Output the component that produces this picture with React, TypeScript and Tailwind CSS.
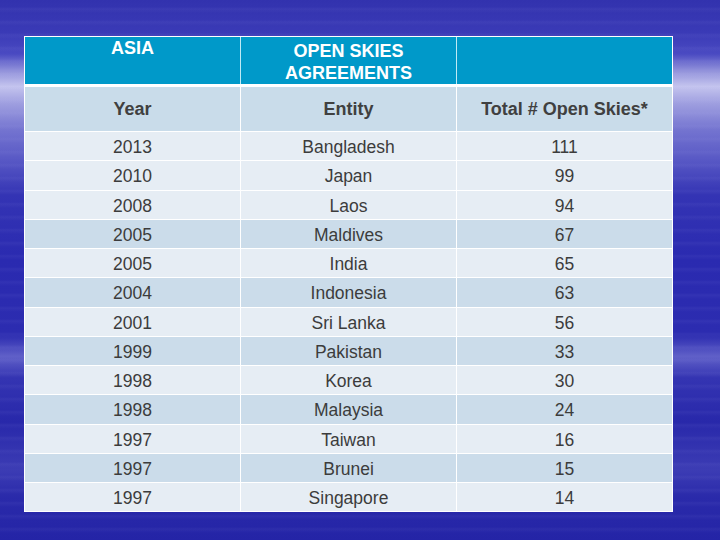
import React from "react";

const rows: { year: string; entity: string; total: string; dark: boolean }[] = [
  { year: "2013", entity: "Bangladesh", total: "111", dark: false },
  { year: "2010", entity: "Japan", total: "99", dark: false },
  { year: "2008", entity: "Laos", total: "94", dark: false },
  { year: "2005", entity: "Maldives", total: "67", dark: true },
  { year: "2005", entity: "India", total: "65", dark: false },
  { year: "2004", entity: "Indonesia", total: "63", dark: true },
  { year: "2001", entity: "Sri Lanka", total: "56", dark: false },
  { year: "1999", entity: "Pakistan", total: "33", dark: true },
  { year: "1998", entity: "Korea", total: "30", dark: false },
  { year: "1998", entity: "Malaysia", total: "24", dark: true },
  { year: "1997", entity: "Taiwan", total: "16", dark: false },
  { year: "1997", entity: "Brunei", total: "15", dark: true },
  { year: "1997", entity: "Singapore", total: "14", dark: false },
];

export default function App() {
  return (
    <div
      className="w-[720px] h-[540px] overflow-hidden pt-[36px] pl-[24px] bg-[repeating-linear-gradient(180deg,rgba(255,255,255,0)_0px,rgba(255,255,255,0)_7px,rgba(200,200,255,0.05)_9px,rgba(255,255,255,0)_13px),linear-gradient(180deg,#3232ae_0%,#3a3ab6_6%,#4a4ac2_10%,#9090da_13%,#c4c4ee_16%,#a0a0e0_19%,#7474d0_24%,#5656c4_30%,#3434b4_36%,#2a2ab0_48%,#2c2cb0_62%,#6060c8_66%,#3434b2_70%,#2828aa_78%,#3c3cb4_87%,#2a2aaa_92%,#2424a6_100%)]"
      style={{ fontFamily: '"Liberation Sans", Arial, sans-serif' }}
    >
      <div className="w-[649px] bg-white p-[1px] flex flex-col">
        <div className="grid grid-cols-[215px_215px_215px] gap-x-[1px] h-[47px] text-white font-bold text-[18px] leading-[22px] text-center bg-[#bfeaf5]">
          <div className="bg-[#0099c9]">ASIA</div>
          <div className="bg-[#0099c9] pt-[3px]">
            OPEN SKIES
            <br />
            AGREEMENTS
          </div>
          <div className="bg-[#0099c9]"></div>
        </div>
        <div className="mt-[3px] grid grid-cols-[215px_215px_215px] gap-x-[1px] h-[44px] text-[#404040] font-bold text-[18px] text-center">
          <div className="bg-[#c9dcea] flex items-center justify-center">Year</div>
          <div className="bg-[#c9dcea] flex items-center justify-center">Entity</div>
          <div className="bg-[#c9dcea] flex items-center justify-center">Total # Open Skies*</div>
        </div>
        {rows.map((r, i) => (
          <div
            key={i}
            className="mt-[1px] grid grid-cols-[215px_215px_215px] gap-x-[1px] h-[28.25px] text-[#3c3c3c] text-[17.5px] text-center"
          >
            <div className={(r.dark ? "bg-[#cbdcea]" : "bg-[#e6edf4]") + " flex items-center justify-center pt-[2px]"}>{r.year}</div>
            <div className={(r.dark ? "bg-[#cbdcea]" : "bg-[#e6edf4]") + " flex items-center justify-center pt-[2px]"}>{r.entity}</div>
            <div className={(r.dark ? "bg-[#cbdcea]" : "bg-[#e6edf4]") + " flex items-center justify-center pt-[2px]"}>{r.total}</div>
          </div>
        ))}
      </div>
    </div>
  );
}
